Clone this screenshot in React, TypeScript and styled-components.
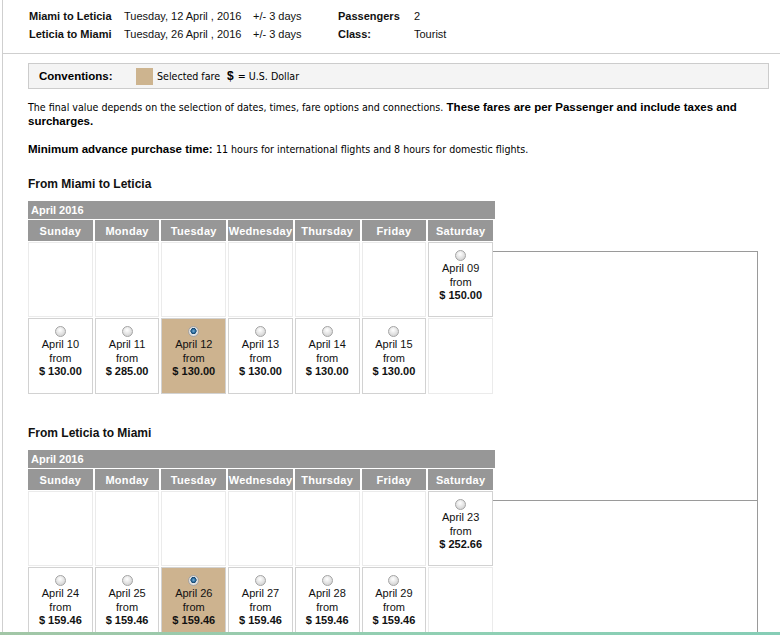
import styled, { createGlobalStyle } from "styled-components";

type Fare = { date: string; price: string; selected?: boolean } | null;

interface Leg {
  title: string;
  weeks: Fare[][];
}

const days = ["Sunday", "Monday", "Tuesday", "Wednesday", "Thursday", "Friday", "Saturday"];

const legs: Leg[] = [
  {
    title: "From Miami to Leticia",
    weeks: [
      [null, null, null, null, null, null, { date: "April 09", price: "$ 150.00" }],
      [
        { date: "April 10", price: "$ 130.00" },
        { date: "April 11", price: "$ 285.00" },
        { date: "April 12", price: "$ 130.00", selected: true },
        { date: "April 13", price: "$ 130.00" },
        { date: "April 14", price: "$ 130.00" },
        { date: "April 15", price: "$ 130.00" },
        null,
      ],
    ],
  },
  {
    title: "From Leticia to Miami",
    weeks: [
      [null, null, null, null, null, null, { date: "April 23", price: "$ 252.66" }],
      [
        { date: "April 24", price: "$ 159.46" },
        { date: "April 25", price: "$ 159.46" },
        { date: "April 26", price: "$ 159.46", selected: true },
        { date: "April 27", price: "$ 159.46" },
        { date: "April 28", price: "$ 159.46" },
        { date: "April 29", price: "$ 159.46" },
        null,
      ],
    ],
  },
];

export default function App() {
  return (
    <>
      <GlobalStyle />
      <Page>
        <Summary>
          <b>Miami to Leticia</b>
          <span>Tuesday, 12 April , 2016</span>
          <span>+/- 3 days</span>
          <b>Passengers</b>
          <span>2</span>
          <b>Leticia to Miami</b>
          <span>Tuesday, 26 April , 2016</span>
          <span>+/- 3 days</span>
          <b>Class:</b>
          <span>Tourist</span>
        </Summary>

        <Content>
          <Conventions>
            <ConventionLabel>Conventions:</ConventionLabel>
            <Swatch />
            <NarrowText>Selected fare</NarrowText>
            <Dollar>$</Dollar>
            <NarrowText>= U.S. Dollar</NarrowText>
          </Conventions>

          <Notice>
            <NarrowText>
              The final value depends on the selection of dates, times, fare options and connections.
            </NarrowText>{" "}
            <b>These fares are per Passenger and include taxes and surcharges.</b>
          </Notice>
          <Notice>
            <b>Minimum advance purchase time:</b>{" "}
            <NarrowText>11 hours for international flights and 8 hours for domestic flights.</NarrowText>
          </Notice>

          {legs.map((leg, i) => (
            <LegSection key={leg.title} $first={i === 0}>
              <LegTitle>{leg.title}</LegTitle>
              <CalendarWrap>
                <Frame />
                <Calendar>
                  <MonthBar>April 2016</MonthBar>
                  {days.map((d) => (
                    <DayHead key={d}>{d}</DayHead>
                  ))}
                  {leg.weeks.flat().map((fare, idx) =>
                    fare ? (
                      <FareCell key={idx} $selected={!!fare.selected}>
                        <Radio $checked={!!fare.selected} />
                        <div>{fare.date}</div>
                        <div>from</div>
                        <Price>{fare.price}</Price>
                      </FareCell>
                    ) : (
                      <EmptyCell key={idx} />
                    )
                  )}
                </Calendar>
              </CalendarWrap>
            </LegSection>
          ))}
        </Content>
      </Page>
      <TaskStrip />
    </>
  );
}

const GlobalStyle = createGlobalStyle`
  html, body {
    margin: 0;
    padding: 0;
    overflow: hidden;
    background: #fff;
  }
  body {
    font-family: "Liberation Sans", Arial, sans-serif;
    font-size: 11px;
    color: #000;
  }
`;

const Page = styled.div`
  margin-left: 2px;
  border-left: 1px solid #cfcfcf;
  min-height: 700px;
`;

const Summary = styled.div`
  display: grid;
  grid-template-columns: 95px 129px 85px 76px auto;
  grid-auto-rows: 18px;
  align-items: center;
  padding: 7px 0 10px 26px;
  border-bottom: 1px solid #cfcfcf;
  font-size: 11px;
  color: #111;
`;

const Content = styled.div`
  padding-left: 25px;
`;

const Conventions = styled.div`
  display: flex;
  align-items: center;
  width: 741px;
  height: 26px;
  box-sizing: border-box;
  margin-top: 9px;
  padding-left: 10px;
  background: #f4f4f4;
  border: 1px solid #cccccc;
`;

const ConventionLabel = styled.b`
  width: 97px;
  font-size: 11.5px;
`;

const Swatch = styled.span`
  width: 17px;
  height: 17px;
  margin-right: 4px;
  background: #cdb48f;
`;

const NarrowText = styled.span`
  font-family: "Liberation Sans Narrow", "Arial Narrow", "DejaVu Sans Condensed", sans-serif;
  font-size: 10.6px;
`;

const Dollar = styled.b`
  margin: 0 4px 0 7px;
  font-size: 12px;
`;

const Notice = styled.p`
  margin: 11px 0 0;
  width: 745px;
  line-height: 14px;
  font-size: 11.5px;

  & + & {
    margin-top: 14px;
  }
`;

const LegSection = styled.section<{ $first: boolean }>`
  margin-top: ${({ $first }) => ($first ? "21px" : "32px")};
`;

const LegTitle = styled.h3`
  margin: 0 0 9px;
  font-size: 12px;
  line-height: 15px;
  font-weight: bold;
  color: #111;
`;

const CalendarWrap = styled.div`
  position: relative;
`;

const Frame = styled.div`
  position: absolute;
  top: 50px;
  left: 450px;
  width: 280px;
  height: 300px;
  box-sizing: border-box;
  border-top: 1px solid #9a9a9a;
  border-right: 1px solid #9a9a9a;
`;

const Calendar = styled.div`
  position: relative;
  width: 465px;
  display: grid;
  grid-template-columns: repeat(7, 1fr);
  grid-template-rows: 18px 21px 75px 76px;
  column-gap: 2px;
  row-gap: 1px;
  background: #fff;
`;

const MonthBar = styled.div`
  grid-column: 1 / -1;
  margin: 0 -2px 0 0;
  padding-left: 3px;
  background: #979797;
  color: #fff;
  font-weight: bold;
  line-height: 18px;
`;

const DayHead = styled.div`
  display: flex;
  align-items: center;
  justify-content: center;
  background: #979797;
  color: #fff;
  font-weight: bold;
  font-size: 11px;
  letter-spacing: 0.3px;
  white-space: nowrap;
`;

const EmptyCell = styled.div`
  border: 1px solid #ebebeb;
  background: #fff;
`;

const FareCell = styled.div<{ $selected: boolean }>`
  display: flex;
  flex-direction: column;
  align-items: center;
  padding-top: 7px;
  border: 1px solid #d2d2d2;
  background: ${({ $selected }) => ($selected ? "#cdb38f" : "#fff")};
  line-height: 13.5px;
  font-size: 11px;
  color: #111;
`;

const Radio = styled.span<{ $checked: boolean }>`
  width: 11px;
  height: 11px;
  margin-bottom: 1px;
  border-radius: 50%;
  box-sizing: border-box;
  border: 1px solid #a4a4a4;
  background: ${({ $checked }) =>
    $checked
      ? "radial-gradient(circle at 50% 45%, #7fb2d8 0, #2a6a9c 28%, #15446b 42%, #e6e6e6 50%, #c9c9c9 100%)"
      : "radial-gradient(circle at 45% 35%, #ffffff 0, #e9e9e9 40%, #c8c8c8 100%)"};
`;

const Price = styled.div`
  font-weight: bold;
`;

const TaskStrip = styled.div`
  position: fixed;
  left: 0;
  right: 0;
  bottom: 0;
  height: 3px;
  background: linear-gradient(90deg, #a2c6a6, #8fd0b4 60%, #86cdb6);
`;
